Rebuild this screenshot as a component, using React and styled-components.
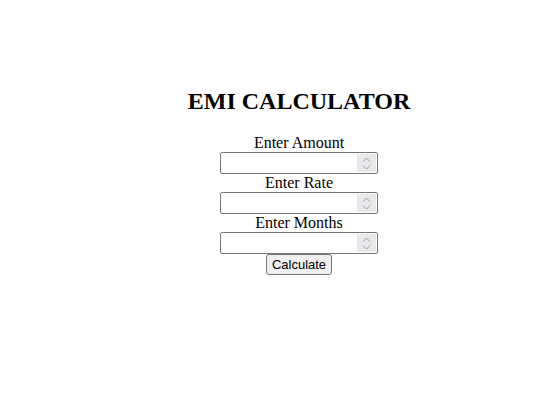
import React from 'react';
import styled, { createGlobalStyle } from 'styled-components';

const GlobalStyle = createGlobalStyle`
  html, body {
    margin: 0;
    background: #ffffff;
  }
`;

const Page = styled.div`
  display: flex;
  flex-direction: column;
  align-items: center;
  padding: 87px 0 0 38px;
  font-family: "Liberation Serif", "Times New Roman", serif;
  color: #000;
`;

const Title = styled.h1`
  margin: 0 0 19px;
  font-size: 24px;
  line-height: 28px;
  font-weight: bold;
`;

const Field = styled.div`
  display: flex;
  flex-direction: column;
  align-items: center;
`;

const Label = styled.label`
  font-size: 16px;
  line-height: 18px;
`;

const InputBox = styled.div`
  display: flex;
  align-items: stretch;
  box-sizing: border-box;
  width: 158px;
  height: 22px;
  border: 1px solid #767676;
  border-radius: 2px;
  background: #fff;
`;

const NumberInput = styled.input`
  flex: 1;
  min-width: 0;
  border: none;
  outline: none;
  padding: 0 4px;
  font-family: "Liberation Sans", Arial, sans-serif;
  font-size: 13px;
  background: transparent;
  -moz-appearance: textfield;

  &::-webkit-inner-spin-button,
  &::-webkit-outer-spin-button {
    -webkit-appearance: none;
    margin: 0;
  }
`;

const Spinner = styled.div`
  display: flex;
  flex-direction: column;
  justify-content: center;
  align-items: center;
  gap: 3px;
  width: 19px;
  margin: 1px 1px 1px 0;
  background: #e9e9ed;
`;

const Button = styled.button`
  box-sizing: border-box;
  height: 21px;
  padding: 0 5px;
  border: 1px solid #767676;
  border-radius: 3px;
  background: #efefef;
  font-family: "Liberation Sans", Arial, sans-serif;
  font-size: 13px;
  color: #000;
`;

const Chevron = ({ up }) => (
  <svg width="9" height="5" viewBox="0 0 9 5">
    <path
      d={up ? 'M1 4.5 L4.5 1 L8 4.5' : 'M1 0.5 L4.5 4 L8 0.5'}
      fill="none"
      stroke="#9a9aa0"
      strokeWidth="1"
    />
  </svg>
);

const NumberField = ({ label }) => (
  <Field>
    <Label>{label}</Label>
    <InputBox>
      <NumberInput type="number" />
      <Spinner>
        <Chevron up />
        <Chevron />
      </Spinner>
    </InputBox>
  </Field>
);

export default function App() {
  return (
    <>
      <GlobalStyle />
      <Page>
        <Title>EMI CALCULATOR</Title>
        <NumberField label="Enter Amount" />
        <NumberField label="Enter Rate" />
        <NumberField label="Enter Months" />
        <Button>Calculate</Button>
      </Page>
    </>
  );
}
